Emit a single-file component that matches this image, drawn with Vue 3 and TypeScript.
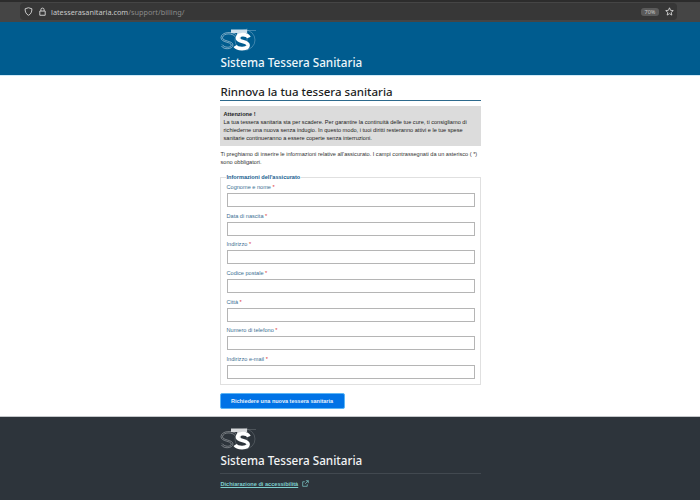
<script setup lang="ts">
const fields: string[] = [
  'Cognome e nome',
  'Data di nascita',
  'Indirizzo',
  'Codice postale',
  'Città',
  'Numero di telefono',
  'Indirizzo e-mail',
]
</script>

<template>
  <div class="page">
    <div class="browser">
      <div class="urlbar">
        <svg class="ic shield" viewBox="0 0 10 10" width="9" height="9"><path d="M5 .8 8.800 2c0 3.600-1.200 6-3.800 7.200C2.400 8 1.200 5.600 1.200 2Z" fill="none" stroke="#d8d8d8" stroke-width="1"/></svg>
        <svg class="ic lock" viewBox="0 0 10 10" width="9" height="9"><path d="M3.200 4.500V3a1.800 1.800 0 0 1 3.600 0v1.500M2 4.500h6v4.700H2Z" fill="none" stroke="#d8d8d8" stroke-width="1"/></svg>
        <span class="url">latesserasanitaria.com<span class="path">/support/billing/</span></span>
        <span class="zoom">70%</span>
        <svg class="star" viewBox="0 0 10 10" width="9" height="9"><path d="M5 .9 6.200 3.700 9.200 4 6.900 6 7.600 9 5 7.400 2.400 9 3.100 6 .8 4 3.800 3.700Z" fill="none" stroke="#e4e4e4" stroke-width=".9" stroke-linejoin="round"/></svg>
      </div>
    </div>

    <header class="masthead">
      <div class="column">
        <svg class="logo" viewBox="0 0 36 24" width="36" height="24" aria-hidden="true">
          <path class="m-fine" d="M11 2.500h25M27 .5v22"/>
          <circle class="m-fine" cx="25" cy="12" r="10"/>
          <path class="m-out" d="M15 8.500C12.500 5 3.500 4.800 2.500 9.500 2 13.500 13 12.500 13 17 12.500 21.500 3.500 22 1.500 18"/>
          <path class="m-out" d="M16 6.500C12.500 3.500 1.500 3.500 1 9.500 1 15 11.500 13.500 11.300 17.300 10.500 20 4.500 20 2 16.500"/>
          <path class="m-t" d="M11 3.200h16M19 3v10"/>
          <path class="m-b" d="M29 9.500C27 5.500 18 5.500 17.500 10c-.5 4.500 11 2.500 10.500 7.500-.5 4-10.500 4-13 .5"/>
        </svg>
        <div class="brand">Sistema Tessera Sanitaria</div>
      </div>
    </header>

    <main class="column main">
      <h1>Rinnova la tua tessera sanitaria</h1>
      <div class="alert">
        <strong>Attenzione !</strong><br />
        La tua tessera sanitaria sta per scadere. Per garantire la continuità delle tue cure, ti consigliamo di
        richiederne una nuova senza indugio. In questo modo, i tuoi diritti resteranno attivi e le tue spese
        sanitarie continueranno a essere coperte senza interruzioni.
      </div>
      <p class="intro">
        Ti preghiamo di inserire le informazioni relative all'assicurato. I campi contrassegnati da un asterisco ( *)
        sono obbligatori.
      </p>
      <form class="form" @submit.prevent>
        <fieldset>
          <legend>Informazioni dell'assicurato</legend>
          <div v-for="f in fields" :key="f" class="field">
            <label>{{ f }} <span class="req">*</span></label>
            <input type="text" />
          </div>
        </fieldset>
        <button type="submit">Richiedere una nuova tessera sanitaria</button>
      </form>
    </main>

    <footer class="foot">
      <div class="column">
        <svg class="logo" viewBox="0 0 36 24" width="36" height="24" aria-hidden="true">
          <path class="m-fine" d="M11 2.500h25M27 .5v22"/>
          <circle class="m-fine" cx="25" cy="12" r="10"/>
          <path class="m-out" d="M15 8.500C12.500 5 3.500 4.800 2.500 9.500 2 13.500 13 12.500 13 17 12.500 21.500 3.500 22 1.500 18"/>
          <path class="m-out" d="M16 6.500C12.500 3.500 1.500 3.500 1 9.500 1 15 11.500 13.500 11.300 17.300 10.500 20 4.500 20 2 16.500"/>
          <path class="m-t" d="M11 3.200h16M19 3v10"/>
          <path class="m-b" d="M29 9.500C27 5.500 18 5.500 17.500 10c-.5 4.500 11 2.500 10.500 7.500-.5 4-10.500 4-13 .5"/>
        </svg>
        <div class="brand">Sistema Tessera Sanitaria</div>
        <div class="foot-links">
          <a href="#">Dichiarazione di accessibilità</a>
          <svg viewBox="0 0 10 10" width="7" height="7"><path d="M7.500 6v3H1V2.500h3M5.500 1H9v3.500M9 1 4.500 5.500" fill="none" stroke="#7fd0cf" stroke-width="1"/></svg>
        </div>
      </div>
    </footer>
  </div>
</template>

<style>
html, body { margin: 0; background: #fff; }
</style>

<style scoped>
.page {
  width: 700px;
  height: 500px;
  overflow: hidden;
  display: flex;
  flex-direction: column;
  font-family: "Liberation Sans", Arial, sans-serif;
  color: #222;
}
.column { width: 261px; margin: 0 auto; }
.browser {
  height: 22px;
  box-sizing: border-box;
  background: #454545;
  border-top: 2px solid #2c2c2c;
  padding: 1px 0 0 20px;
  flex: none;
}
.urlbar {
  height: 17px;
  width: 657px;
  box-sizing: border-box;
  background: #373737;
  border-radius: 4px;
  display: flex;
  align-items: center;
  padding: 0 3px 0 4px;
}
.ic { margin-right: 5px; flex: none; }
.lock { margin-right: 4px; }
.url { font-family: "Noto Sans", sans-serif; font-size: 7.300px; color: #c8c8c8; flex: 1; }
.path { color: #8a8a8a; }
.zoom {
  background: #5a5a5a;
  color: #c9c9c9;
  font-family: "Noto Sans", sans-serif;
  font-size: 5.500px;
  line-height: 8px;
  border-radius: 3px;
  width: 18px;
  margin-right: 6px;
  text-align: center;
}
.star { flex: none; }
.masthead {
  height: 54px;
  box-sizing: border-box;
  background: #005c8f;
  border-bottom: 1px solid #cfeaf8;
  padding-top: 6px;
  flex: none;
}
.logo { display: block; }
.m-fine { fill: none; stroke: #9fc3d9; stroke-width: .4; }
.m-out { fill: none; stroke: #dbe8f0; stroke-width: .55; }
.m-t { fill: none; stroke: #cfe0ec; stroke-width: 3.500; }
.m-b { fill: none; stroke: #fff; stroke-width: 3.800; }
.brand {
  font-family: "Noto Sans", sans-serif;
  font-size: 11.700px;
  font-weight: 500;
  line-height: 16px;
  color: #eef6fa;
  margin-top: 2px;
  padding-left: 1px;
}
.main { flex: 1; min-height: 0; display: flex; flex-direction: column; }
h1 {
  font-family: "Noto Sans", sans-serif;
  font-size: 11.500px;
  font-weight: 500;
  line-height: 16px;
  margin: 8px 0 0;
  padding-left: 1px;
  color: #1d1d1d;
  border-bottom: 1px solid #2d6a8d;
}
.alert {
  background: #dcdcdc;
  margin-top: 5px;
  padding: 4px;
  font-size: 5.600px;
  line-height: 8px;
  color: #222;
  height: 40px;
  box-sizing: border-box;
}
.intro { margin: 4px 0 0; padding-left: 1px; font-size: 5.600px; line-height: 8px; color: #333; }
.form { display: flex; flex-direction: column; align-items: flex-start; }
fieldset {
  width: 100%;
  box-sizing: border-box;
  margin: 7px 0 0;
  padding: 2px 5px 4px 6px;
  border: 1px solid #e0e0e0;
  height: 212px;
}
legend {
  font-size: 5.600px;
  font-weight: 700;
  color: #17608f;
  line-height: 8px;
  padding: 0 1px;
  margin-left: -1px;
}
.field { height: 28.670px; }
label { display: block; font-size: 5.600px; line-height: 8px; color: #3c6f92; }
.req { color: #d33; }
input {
  display: block;
  width: 100%;
  height: 14px;
  box-sizing: border-box;
  margin: 2px 0 0;
  border: 1px solid #b5b5b5;
  background: #fff;
  padding: 0;
  outline: none;
}
button {
  margin-top: 8px;
  width: 125px;
  height: 15.500px;
  border: 1px solid #5cb6f5;
  border-radius: 2px;
  background: #0073e6;
  color: #e8f2fc;
  font: 700 5.500px "Liberation Sans", sans-serif;
  padding: 0;
}
.foot {
  height: 84px;
  box-sizing: border-box;
  background: #2d343b;
  border-top: 1px solid #c4c7ca;
  padding-top: 10px;
  flex: none;
}
.foot .brand { color: #f2f3f4; margin-top: 1px; }
.foot .m-fine { stroke: #7f858c; }
.foot .m-out { stroke: #b4b8bc; }
.foot .m-t { stroke: #d8dadc; }
.foot-links {
  margin-top: 5px;
  padding: 6px 0 0 1px;
  border-top: 1px solid #424950;
  display: flex;
  align-items: center;
  gap: 4px;
  font-size: 5.600px;
}
.foot-links a { color: #7fd0cf; font-weight: 700; text-decoration: underline; }
</style>
